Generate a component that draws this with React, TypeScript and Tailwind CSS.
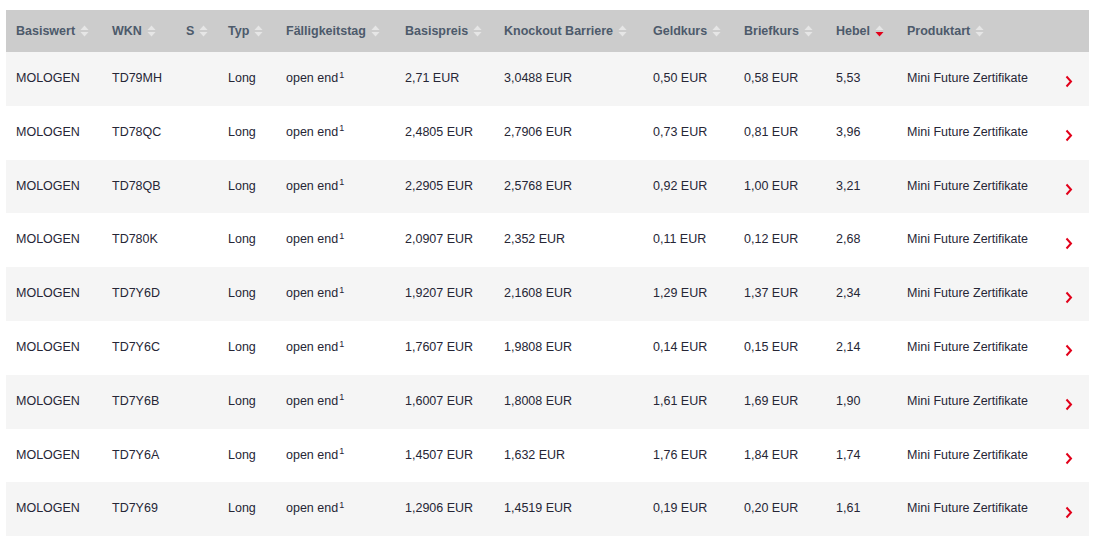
const rows = [
  ['TD79MH', '2,71 EUR', '3,0488 EUR', '0,50 EUR', '0,58 EUR', '5,53'],
  ['TD78QC', '2,4805 EUR', '2,7906 EUR', '0,73 EUR', '0,81 EUR', '3,96'],
  ['TD78QB', '2,2905 EUR', '2,5768 EUR', '0,92 EUR', '1,00 EUR', '3,21'],
  ['TD780K', '2,0907 EUR', '2,352 EUR', '0,11 EUR', '0,12 EUR', '2,68'],
  ['TD7Y6D', '1,9207 EUR', '2,1608 EUR', '1,29 EUR', '1,37 EUR', '2,34'],
  ['TD7Y6C', '1,7607 EUR', '1,9808 EUR', '0,14 EUR', '0,15 EUR', '2,14'],
  ['TD7Y6B', '1,6007 EUR', '1,8008 EUR', '1,61 EUR', '1,69 EUR', '1,90'],
  ['TD7Y6A', '1,4507 EUR', '1,632 EUR', '1,76 EUR', '1,84 EUR', '1,74'],
  ['TD7Y69', '1,2906 EUR', '1,4519 EUR', '0,19 EUR', '0,20 EUR', '1,61'],
];

const headers = [
  'Basiswert',
  'WKN',
  'S',
  'Typ',
  'Fälligkeitstag',
  'Basispreis',
  'Knockout Barriere',
  'Geldkurs',
  'Briefkurs',
  'Hebel',
  'Produktart',
];

const widths = [96, 74, 42, 58, 119, 99, 149, 91, 92, 71, 158, 34];

function SortIcon({ active }: { active?: boolean }) {
  return (
    <svg width="9" height="14" viewBox="0 0 9 14" className="ml-[5px] shrink-0">
      <path d="M0.5 6 L4.5 1.5 L8.5 6 Z" fill="#e6e6e6" />
      <path d="M0.5 8 L4.5 12.5 L8.5 8 Z" fill={active ? '#e2001a' : '#e6e6e6'} />
    </svg>
  );
}

function Chevron() {
  return (
    <svg width="8" height="13" viewBox="0 0 8 13">
      <path d="M1.5 1.5 L6 6.5 L1.5 11.5" fill="none" stroke="#e2001a" strokeWidth="2" />
    </svg>
  );
}

export default function App() {
  return (
    <div className="w-[1096px] h-[549px] bg-white pt-[10px] pl-[6px]" style={{ fontFamily: '"Liberation Sans", Arial, sans-serif' }}>
      <table className="table-fixed border-collapse w-[1083px] text-[12.5px]">
        <colgroup>
          {widths.map((w, i) => (
            <col key={i} style={{ width: w }} />
          ))}
        </colgroup>
        <thead>
          <tr className="bg-[#cccccc] h-[42px]">
            {headers.map((h) => (
              <th key={h} className="text-left font-bold text-[#4d5a6b] pl-[10px] p-0 align-middle">
                <span className="flex items-center whitespace-nowrap">
                  {h}
                  <SortIcon active={h === 'Hebel'} />
                </span>
              </th>
            ))}
            <th />
          </tr>
        </thead>
        <tbody>
          {rows.map((r, i) => (
            <tr key={r[0]} className={`h-[53.8px] text-[#262636] ${i % 2 === 0 ? 'bg-[#f5f5f5]' : 'bg-white'}`}>
              <td className="pl-[10px] pb-[1px]">MOLOGEN</td>
              <td className="pl-[10px] pb-[1px]">{r[0]}</td>
              <td className="pl-[10px] pb-[1px]"></td>
              <td className="pl-[10px] pb-[1px]">Long</td>
              <td className="pl-[10px] pb-[1px] whitespace-nowrap">
                open end<sup className="text-[9px] ml-[1px]">1</sup>
              </td>
              <td className="pl-[10px] pb-[1px] whitespace-nowrap">{r[1]}</td>
              <td className="pl-[10px] pb-[1px] whitespace-nowrap">{r[2]}</td>
              <td className="pl-[10px] pb-[1px] whitespace-nowrap">{r[3]}</td>
              <td className="pl-[10px] pb-[1px] whitespace-nowrap">{r[4]}</td>
              <td className="pl-[10px] pb-[1px]">{r[5]}</td>
              <td className="pl-[10px] pb-[1px] whitespace-nowrap">Mini Future Zertifikate</td>
              <td className="pl-[10px] pt-[6px]">
                <Chevron />
              </td>
            </tr>
          ))}
        </tbody>
      </table>
    </div>
  );
}
